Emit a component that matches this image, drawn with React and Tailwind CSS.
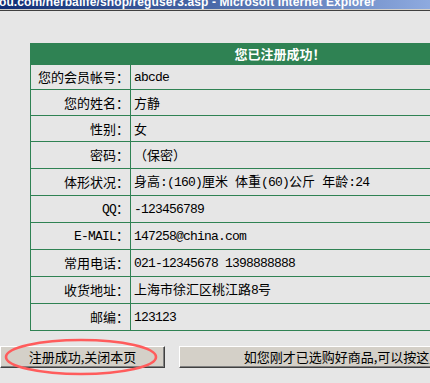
import React from 'react';

const cjk = "font-['Noto_Sans_CJK_SC',sans-serif]";

const rows = [
    {label: '您的会员帐号：', value: 'abcde', h: 'h-[24px]'},
    {label: '您的姓名：', value: '方静', h: 'h-[25px]'},
    {label: '性别：', value: '女', h: 'h-[25px]'},
    {label: '密码：', value: '（保密）', h: 'h-[26px]'},
    {label: '体形状况：', value: '身高:(160)厘米 体重(60)公斤 年龄:24', h: 'h-[26px]'},
    {label: 'QQ：', value: '-123456789', h: 'h-[26px]'},
    {label: 'E-MAIL：', value: '147258@china.com', h: 'h-[26px]'},
    {label: '常用电话：', value: '021-12345678 1398888888', h: 'h-[26px]'},
    {label: '收货地址：', value: '上海市徐汇区桃江路8号', h: 'h-[26px]'},
    {label: '邮编：', value: '123123', h: 'h-[26px]'},
];

// ascii runs get the narrow courier-like font, like SimSun's half-width glyphs
const Mixed = ({text}) => {
    const parts = text.split(/([\x00-\x7f]+)/).filter((p) => p !== '');
    return (
        <span className="leading-[16px]">
            {parts.map((p, i) =>
                /^[\x00-\x7f]+$/.test(p) ? (
                    <span key={i} className="font-['Liberation_Mono',monospace] text-[13px] tracking-[-0.8px] whitespace-pre">
                        {p}
                    </span>
                ) : (
                    <span key={i}>{p}</span>
                )
            )}
        </span>
    );
};

function App() {
    return (
        <div className={`relative w-[430px] h-[383px] overflow-hidden bg-[#e6e6e6] text-black ${cjk}`}>
            {/* IE title bar, cut at top */}
            <div className="h-[9px] overflow-hidden bg-linear-to-r from-[#102c74] to-[#8eaadf]">
                <div className="mt-[-4px] ml-[-1px] whitespace-nowrap text-white font-bold text-[12px] leading-[12px] tracking-[0.1px] font-['Liberation_Sans',sans-serif]">
                    ou.com/herbalife/shop/reguser3.asp - Microsoft Internet Explorer
                </div>
            </div>
            <div className="h-px bg-[#d4d0c8]"></div>
            <div className="h-px bg-[#404040]"></div>

            <div className="pl-[30px] pt-[32px]">
                <div className="w-[500px] border border-[#2f8253]">
                    <div className="h-[20px] bg-[#2f8253] border-b border-[#2f8253] box-content flex items-center justify-center text-white font-bold text-[13px]">
                        您已注册成功！
                    </div>
                    {rows.map((r) => (
                        <div key={r.label} className={`flex border-b border-[#2f8253] last:border-b-0 box-content ${r.h}`}>
                            <div className="w-[100px] shrink-0 border-r border-[#2f8253] flex items-center justify-end pr-[1px] text-[13px] whitespace-nowrap">
                                <Mixed text={r.label}/>
                            </div>
                            <div className="flex-1 flex items-center pl-[3px] text-[13px] whitespace-nowrap">
                                <Mixed text={r.value}/>
                            </div>
                        </div>
                    ))}
                </div>
            </div>

            <div className="flex gap-[14px] mt-[15px] whitespace-nowrap">
                <button className="w-[165px] h-[22px] shrink-0 bg-[#d4d0c8] border border-t-white border-l-white border-r-[#404040] border-b-[#404040] shadow-[inset_-1px_-1px_0_#808080] text-[13px] flex items-center justify-center">
                    注册成功,关闭本页
                </button>
                <button className="w-[380px] h-[22px] shrink-0 bg-[#d4d0c8] border border-t-white border-l-white border-r-[#404040] border-b-[#404040] shadow-[inset_-1px_-1px_0_#808080] text-[13px] flex items-center justify-center">
                    如您刚才已选购好商品,可以按这里继续购物
                </button>
            </div>

            {/* red hand-drawn circle around the close button */}
            <svg className="absolute left-[4px] top-[338px] pointer-events-none" width="154" height="38" viewBox="0 0 154 38">
                <ellipse cx="77" cy="19" rx="75" ry="17" fill="none" stroke="#ff5c5c" strokeWidth="2.6"/>
            </svg>
        </div>
    );
}

export default App;
